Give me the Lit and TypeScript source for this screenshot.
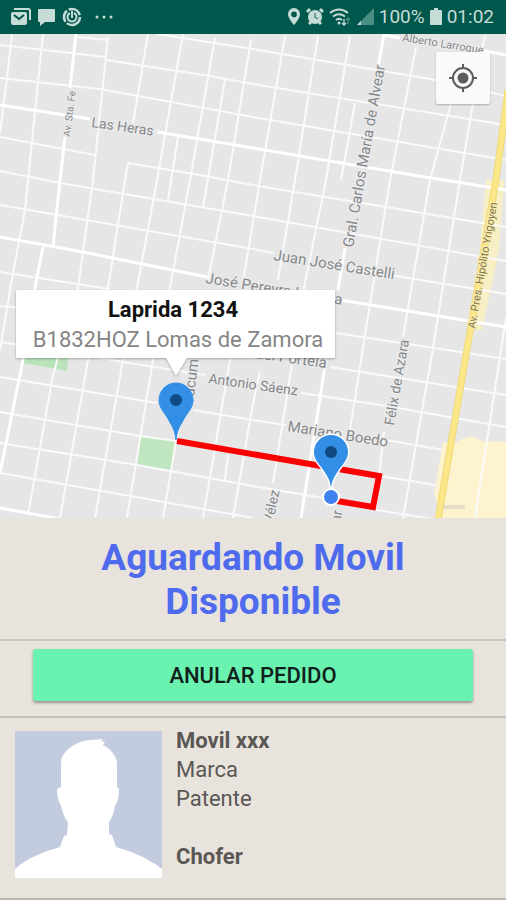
import { LitElement, html, svg, css } from "lit";
import { customElement } from "lit/decorators.js";

const MINOR_STREETS = [
  // west to east
  "M77 37L108 40M157 34L253 49L436 80L506 96",
  "M0 45L106 57M106 60L210 76L253 84L506 125",
  "M0 78L100 89L253 117L506 160",
  "M0 137L95 155M128 163L200 175L253 185L386 207L506 227",
  "M0 171L60 183L253 216L506 261",
  "M0 205L253 249L274 253M390 275L506 294",
  "M0 272L110 289M336 333L506 359",
  "M0 306L20 308M330 367L506 395",
  "M0 342L20 345M68 352L123 362L205 375M301 393L381 405L506 427",
  "M0 377L157 403M193 410L253 420L286 425M386 440L443 450",
  "M0 412L140 436L176 441M380 476L436 485",
  "M0 443L137 465L253 486L323 498M376 510L433 519",
  "M0 473L130 496L253 518",
  // north to south
  "M12 34L7 78L0 133",
  "M43 34L28 180L25 210L13 273L0 350",
  "M108 37L93 180L78 288L53 375L28 515",
  "M148 34L133 123M128 163L125 180L108 288L88 360L60 518",
  "M183 34L157 180L137 288L123 360L95 518",
  "M178 137L168 200",
  "M215 38L190 180L170 288L153 360L127 518",
  "M225 80L203 207",
  "M251 40L228 180L208 280M190 380L176 441L163 518",
  "M285 36L260 180L245 270L230 360L203 518",
  "M318 36L295 180L278 280M260 372L253 403L233 518",
  "M350 36L326 180L305 283L273 483",
  "M355 103L341 180",
  "M228 455L225 480",
  "M416 47L390 180L361 360L350 430",
  "M452 100L430 180L403 337M384 432L379 476",
  "M473 103L460 180L431 360L403 518",
  "M485 36L482 50",
  "M506 318L501 350L475 518",
];

const MAJOR_STREETS = [
  "M0 105L90 119M157 132L253 148L413 175L506 190",
  "M0 237L83 252L207 277M340 300L506 327",
  "M0 508L60 519",
  "M76 34L70 88M65 137L60 180L53 247M43 247L35 288L23 360L0 473",
  "M384 34L378 68M345 248L338 290M326 360L301 518",
  "M383 35L400 38M480 50L506 55",
];

interface StreetLabel {
  name: string;
  x: number;
  y: number;
  turn: number;
  size: number;
  tone?: string;
}

const LABELS: StreetLabel[] = [
  { name: "Alberto Larroque", x: 402, y: 41, turn: 9, size: 11 },
  { name: "Las Heras", x: 91, y: 127, turn: 8, size: 14 },
  { name: "Av. Sta. Fe", x: 70, y: 137, turn: -83, size: 10 },
  { name: "Gral. Carlos María de Alvear", x: 353, y: 248, turn: -80, size: 15 },
  { name: "Juan José Castelli", x: 273, y: 260, turn: 9, size: 15 },
  { name: "José Pereyra Lucena", x: 205, y: 283, turn: 9, size: 15 },
  { name: "Manuel Portela", x: 226, y: 354, turn: 8, size: 15 },
  { name: "Antonio Sáenz", x: 208, y: 383, turn: 8, size: 14 },
  { name: "Mariano Boedo", x: 287, y: 431, turn: 9, size: 15 },
  { name: "Tucumán", x: 193, y: 405, turn: -83, size: 15 },
  { name: "Félix de Azara", x: 394, y: 426, turn: -80, size: 14 },
  { name: "Vélez", x: 273, y: 524, turn: -79, size: 14 },
  { name: "Bolívar", x: 335, y: 553, turn: -80, size: 14 },
  { name: "Av. Pres. Hipólito Yrigoyen", x: 475, y: 329, turn: -80, size: 11, tone: "avenue" },
];

const PIN = "M0 40C-1 30-4 26-9 17C-13 11-17 7-17 0A17 17 0 0 1 17 0C17 7 13 11 9 17C4 26 1 30 0 40Z";
const PIN_SHORT = "M0 36C-1 27-4 24-9 16C-13 11-17 7-17 0A17 17 0 0 1 17 0C17 7 13 11 9 16C4 24 1 27 0 36Z";

@customElement("status-bar")
export class StatusBar extends LitElement {
  static styles = css`
    :host {
      display: flex;
      align-items: center;
      justify-content: space-between;
      height: 34px;
      padding: 0 12px 0 10px;
      background: #00574b;
      color: #c5dcd7;
      font: 400 19px/34px Roboto, sans-serif;
    }
    .group {
      display: flex;
      align-items: center;
    }
    .notices {
      gap: 6px;
    }
    .state {
      gap: 5px;
    }
    svg {
      display: block;
      fill: currentColor;
    }
  `;

  render() {
    return html`
      <div class="group notices">
        <svg width="21" height="20" viewBox="0 0 21 20" aria-label="Correo">
          <path d="M4 2H18Q20 2 20 4V13" fill="none" stroke="currentColor" stroke-width="2" />
          <path d="M3 5H15Q17 5 17 7V16Q17 18 15 18H3Q1 18 1 16V7Q1 5 3 5Z" />
          <path d="M4 8L9 12L14 8" fill="none" stroke="#00574b" stroke-width="2" />
        </svg>
        <svg width="19" height="20" viewBox="0 0 19 20" aria-label="Mensaje">
          <path d="M2 2H17Q18 2 18 3V14Q18 15 17 15H8L3 19V15H2Q1 15 1 14V3Q1 2 2 2Z" />
        </svg>
        <svg width="20" height="20" viewBox="0 0 20 20" aria-label="Servicio activo">
          <g fill="none" stroke="currentColor">
            <circle cx="10" cy="10" r="8" stroke-width="2.500" stroke-dasharray="18 2 12 2 14 2" />
            <path d="M8 6A4.500 4.500 0 1 0 12 6M10 4V11" stroke-width="2" />
          </g>
        </svg>
        <svg width="30" height="20" viewBox="0 0 30 20" aria-label="Más avisos">
          <circle cx="9" cy="10" r="1.500" /><circle cx="16" cy="10" r="1.500" /><circle cx="23" cy="10" r="1.500" />
        </svg>
      </div>
      <div class="group state">
        <svg width="14" height="20" viewBox="0 0 14 20" aria-label="Ubicación">
          <path fill-rule="evenodd" d="M7 1A6 6 0 0 0 1 7.500C1 11.500 7 18 7 18S13 11.500 13 7.500A6 6 0 0 0 7 1ZM7 4.600A2.800 2.800 0 1 1 7 10.200A2.800 2.800 0 0 1 7 4.600Z" />
        </svg>
        <svg width="18" height="20" viewBox="0 0 18 20" aria-label="Alarma">
          <circle cx="9" cy="10" r="7" />
          <path d="M1 5L4 2M17 5L14 2M3 17L5 15M15 17L13 15" stroke="currentColor" stroke-width="3" />
          <path d="M9 6V10L12 12" fill="none" stroke="#4b8f82" stroke-width="1.500" />
        </svg>
        <svg width="22" height="20" viewBox="0 0 22 20" aria-label="Wi-Fi">
          <g fill="none" stroke="currentColor" stroke-width="2">
            <path d="M1 6Q10-1 19 6M4 9.500Q10 5 16 9.500M7 13Q10 10.500 13 13" />
          </g>
          <circle cx="10" cy="16" r="1.500" />
          <path d="M15 12V18M13 16L15 18L17 16" fill="none" stroke="currentColor" stroke-width="1.300" />
          <path d="M19 17V11M17 13L19 11L21 13" fill="none" stroke="#4b8f82" stroke-width="1.300" />
        </svg>
        <svg width="18" height="20" viewBox="0 0 18 20" aria-label="Señal">
          <path d="M18 1V18H1Z" fill="#4b8f82" />
          <path d="M5 14V18H1Z" />
        </svg>
        <span>100%</span>
        <svg width="12" height="20" viewBox="0 0 12 20" aria-label="Batería">
          <path d="M4 1H8V3H11Q12 3 12 4V17Q12 18 11 18H1Q0 18 0 17V4Q0 3 1 3H4Z" />
        </svg>
        <span>01:02</span>
      </div>
    `;
  }
}

@customElement("trip-map")
export class TripMap extends LitElement {
  static styles = css`
    :host {
      display: block;
      position: relative;
      background: #e6e6e6;
      font-family: Roboto, sans-serif;
    }
    .map {
      display: block;
      width: 100%;
      height: auto;
    }
    .minor {
      fill: none;
      stroke: #fafafa;
      stroke-width: 2;
    }
    .major {
      fill: none;
      stroke: #ffffff;
      stroke-width: 3;
    }
    .label {
      fill: #85888b;
      stroke: #ededed;
      stroke-width: 2;
      paint-order: stroke;
    }
    .avenue {
      fill: #7c7450;
      stroke: #fbeeb0;
    }
    .route {
      fill: none;
      stroke: #fb0000;
      stroke-width: 6;
    }
    .bubble {
      fill: #ffffff;
      filter: drop-shadow(0 1px 1px #0000004d);
    }
    .place {
      fill: #111111;
      font-size: 22px;
      font-weight: 700;
      text-anchor: middle;
    }
    .city {
      fill: #858585;
      font-size: 22px;
      text-anchor: middle;
    }
    .locate {
      position: absolute;
      top: 18px;
      right: 16px;
      display: grid;
      place-items: center;
      width: 54px;
      height: 52px;
      padding: 0;
      border: 0;
      border-radius: 2px;
      background: #fafafa;
      box-shadow: 0 1px 2px #00000040;
      cursor: pointer;
    }
  `;

  render() {
    return html`
      <svg class="map" viewBox="0 34 506 484" role="img" aria-label="Mapa del pedido">
        <path d="M486 180H504L499 250L482 330L472 330Z" fill="#f8efc4" />
        <path d="M443 442L453 443L470 436L483 441L506 442V518H441L434 493Z" fill="#fdf3cf" />
        <path d="M23 357H68L67 371L23 363Z" fill="#b9e3bb" />
        <path d="M141 436L175 441L172 470L137 465Z" fill="#bfe6bf" />
        ${MINOR_STREETS.map((d) => svg`<path class="minor" d=${d} />`)}
        ${MAJOR_STREETS.map((d) => svg`<path class="major" d=${d} />`)}
        <path d="M443 507H465" stroke="#e3dfc8" stroke-width="4" />
        <path d="M508 90L496 180L466 355L438 520" fill="none" stroke="#efd97a" stroke-width="7" />
        <path d="M508 90L496 180L466 355L438 520" fill="none" stroke="#fce788" stroke-width="5" />
        ${LABELS.map(
          (l) => svg`<text class="label ${l.tone ?? ""}" font-size=${l.size}
            transform="translate(${l.x} ${l.y}) rotate(${l.turn})">${l.name}</text>`
        )}
        <path class="route" d="M177 441L379 476L373 507L331 500" />
        <g transform="translate(176 400)">
          <path d=${PIN} fill="#338fe6" stroke="#338fe6" stroke-width="1" />
          <circle r="6" fill="#104a80" />
        </g>
        <g transform="translate(331 452)">
          <path d=${PIN_SHORT} fill="#338fe6" stroke="#ffffff" stroke-width="3" paint-order="stroke" />
          <circle r="6" fill="#104a80" />
        </g>
        <circle cx="331" cy="497" r="8" fill="#3f82ee" stroke="#ffffff" stroke-width="2" />
        <path class="bubble" d="M17 290H334Q335 290 335 291V357Q335 358 334 358H187L176 376L166 358H17Q16 358 16 357V291Q16 290 17 290Z" />
        <text class="place" x="173" y="317">Laprida 1234</text>
        <text class="city" x="178" y="347">B1832HOZ Lomas de Zamora</text>
      </svg>
      <button class="locate" type="button" aria-label="Mi ubicación">
        <svg width="30" height="30" viewBox="0 0 30 30">
          <circle cx="15" cy="15" r="10" fill="none" stroke="#5c5c5c" stroke-width="2" />
          <circle cx="15" cy="15" r="5.500" fill="#5c5c5c" />
          <path d="M15 1V6M15 24V29M1 15H6M24 15H29" stroke="#5c5c5c" stroke-width="2" />
        </svg>
      </button>
    `;
  }
}

@customElement("app-root")
export class AppRoot extends LitElement {
  static styles = css`
    :host {
      display: block;
      min-height: 100vh;
      background: #e8e4dd;
      color: #5a5754;
      font-family: Roboto, sans-serif;
    }
    .title {
      margin: 0;
      padding: 18px 80px 15px;
      color: #4f6bed;
      font-size: 37px;
      font-weight: 700;
      line-height: 44px;
      text-align: center;
    }
    .actions {
      padding: 8px 33px 15px;
      border-top: 2px solid #c9c6c1;
      border-bottom: 2px solid #c4c1bd;
    }
    .cancel {
      display: block;
      width: 100%;
      height: 52px;
      border: 0;
      border-radius: 3px;
      background: #6af2b0;
      box-shadow: 0 2px 3px #00000059;
      color: #10201a;
      font: 500 22px/52px Roboto, sans-serif;
      cursor: pointer;
    }
    .vehicle {
      display: flex;
      gap: 14px;
      padding: 8px 15px 20px;
      border-bottom: 2px solid #b9b6b1;
    }
    .avatar {
      display: block;
      flex: none;
      width: 147px;
      height: 147px;
      margin-top: 5px;
    }
    .details {
      display: flex;
      flex-direction: column;
      font-size: 22px;
      line-height: 29px;
    }
    .details p {
      margin: 0;
    }
    .details .strong {
      font-weight: 700;
    }
    .details .driver {
      margin-top: 29px;
    }
  `;

  render() {
    return html`
      <status-bar></status-bar>
      <main>
        <trip-map></trip-map>
        <h1 class="title">Aguardando Movil Disponible</h1>
        <section class="actions">
          <button class="cancel" type="button">ANULAR PEDIDO</button>
        </section>
        <section class="vehicle">
          <svg class="avatar" viewBox="0 0 147 147" role="img" aria-label="Foto del chofer">
            <path d="M0 0H147V147H0Z" fill="#c3cbdf" />
            <path
              d="M0 138C14 126 28 121 45 116L49 105L52 104L53 91C49 87 47 78 46 75C43 69 42 64 42 58L46 56V30C48 18 64 9 76 9L88 8L86 11L90 10L88 14C96 18 101 25 102 31V56L104 58C104 65 103 70 100 75C99 81 97 87 94 91V103L97 104L101 116C118 121 133 127 147 138V147H0Z"
              fill="#ffffff"
            />
          </svg>
          <div class="details">
            <p class="strong">Movil xxx</p>
            <p>Marca</p>
            <p>Patente</p>
            <p class="strong driver">Chofer</p>
          </div>
        </section>
      </main>
    `;
  }
}
